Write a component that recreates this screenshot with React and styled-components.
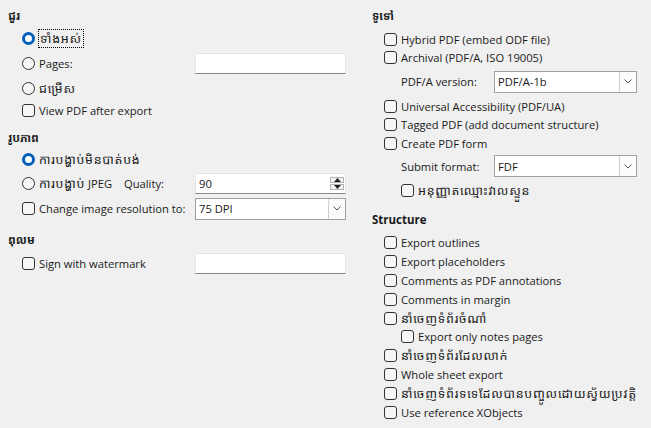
import React from 'react';
import styled, { createGlobalStyle } from 'styled-components';

const GlobalStyle = createGlobalStyle`
  html, body {
    margin: 0;
    padding: 0;
    background: #f0f0f0;
  }
  body {
    font-family: "Open Sans", "Noto Sans", "Noto Sans Khmer", "Khmer OS", sans-serif;
    font-size: 11.2px;
    color: #1a1a1a;
  }
`;

const Page = styled.div`
  width: 651px;
  height: 428px;
  display: grid;
  grid-template-columns: 364px 1fr;
  overflow: hidden;
`;

const Column = styled.div`
  display: flex;
  flex-direction: column;
  padding-left: ${p => p.$pad}px;
`;

const Heading = styled.div`
  height: 22px;
  margin-top: ${p => p.$top}px;
  margin-bottom: ${p => p.$bottom || 0}px;
  display: flex;
  align-items: center;
  font-weight: 700;
  font-size: 11.5px;
`;

const Row = styled.div`
  height: ${p => p.$h}px;
  display: flex;
  align-items: center;
  padding-left: ${p => p.$indent}px;
  flex-shrink: 0;
`;

const Option = styled.label`
  display: flex;
  align-items: center;
  gap: 4px;
  white-space: nowrap;
  width: ${p => (p.$w ? `${p.$w}px` : 'auto')};
`;

const Km = styled.span`
  font-size: 12.5px;
  letter-spacing: 0.7px;
`;

const Box = styled.span`
  width: 13px;
  height: 13px;
  box-sizing: border-box;
  border: 1px solid #333;
  border-radius: 3px;
  background: #f6f6f6;
  flex-shrink: 0;
`;

const Radio = styled.span`
  width: 13px;
  height: 13px;
  box-sizing: border-box;
  border-radius: 50%;
  flex-shrink: 0;
  border: ${p => (p.$on ? '3.5px solid #005fb8' : '1px solid #333')};
  background: ${p => (p.$on ? '#fff' : '#f6f6f6')};
`;

const Focus = styled.span`
  outline: 1px dotted #000;
  outline-offset: 0;
  padding: 0 1px;
`;

const FieldLabel = styled.span`
  width: ${p => p.$w}px;
  white-space: nowrap;
  flex-shrink: 0;
`;

const TextInput = styled.div`
  width: 151px;
  height: 21px;
  box-sizing: border-box;
  background: #fff;
  border: 1px solid #e5e5e5;
  border-bottom: 1px solid #868686;
  display: flex;
  align-items: center;
  padding-left: 3px;
`;

const Select = styled.div`
  width: ${p => p.$w}px;
  height: 22px;
  box-sizing: border-box;
  background: #fff;
  border: 1px solid #a0a0a0;
  display: flex;
  align-items: stretch;
`;

const SelectText = styled.span`
  flex: 1;
  display: flex;
  align-items: center;
  padding-left: 3px;
`;

const SelectButton = styled.span`
  width: 16px;
  border-left: 1px solid #d0d0d0;
  display: flex;
  align-items: center;
  justify-content: center;
  background: #fbfbfb;
`;

const Spin = styled.div`
  width: 16px;
  display: flex;
  flex-direction: column;
  gap: 1px;
  padding: 1px;
  box-sizing: border-box;
`;

const SpinButton = styled.span`
  flex: 1;
  border: 1px solid #b5b5b5;
  background: #f3f3f3;
  display: flex;
  align-items: center;
  justify-content: center;
`;

const Chevron = () => (
  <svg width="8" height="5" viewBox="0 0 8 5">
    <path d="M0.5 0.5 L4 4 L7.5 0.5" fill="none" stroke="#555" strokeWidth="1" />
  </svg>
);

const Tri = ({ up }) => (
  <svg width="7" height="4" viewBox="0 0 7 4">
    <path d={up ? 'M0 4 L3.5 0 L7 4 Z' : 'M0 0 L3.5 4 L7 0 Z'} fill="#222" />
  </svg>
);

const Check = ({ children }) => (
  <Option>
    <Box />
    <span>{children}</span>
  </Option>
);

const structure = [
  { t: 'Export outlines' },
  { t: 'Export placeholders' },
  { t: 'Comments as PDF annotations' },
  { t: 'Comments in margin' },
  { t: 'នាំចេញទំព័រចំណាំ', km: true },
  { t: 'Export only notes pages', sub: true },
  { t: 'នាំចេញទំព័រដែលលាក់', km: true },
  { t: 'Whole sheet export' },
  { t: 'នាំចេញទំព័រទទេដែលបានបញ្ចូលដោយស្វ័យប្រវត្តិ', km: true },
  { t: 'Use reference XObjects' },
];

export default function App() {
  return (
    <>
      <GlobalStyle />
      <Page>
        <Column $pad={8}>
          <Heading $top={4}>ជួរ</Heading>
          <Row $h={24} $indent={14}>
            <Option>
              <Radio $on />
              <Focus><Km>ទាំងអស់</Km></Focus>
            </Option>
          </Row>
          <Row $h={26} $indent={14}>
            <Option $w={173}>
              <Radio />
              <span>Pages:</span>
            </Option>
            <TextInput />
          </Row>
          <Row $h={24} $indent={14}>
            <Option>
              <Radio />
              <Km>ជម្រើស</Km>
            </Option>
          </Row>
          <Row $h={20} $indent={14}>
            <Check>View PDF after export</Check>
          </Row>

          <Heading $top={6}>រូបភាព</Heading>
          <Row $h={23} $indent={14}>
            <Option>
              <Radio $on />
              <Km>ការបង្ហាប់មិនបាត់បង់</Km>
            </Option>
          </Row>
          <Row $h={24} $indent={14}>
            <Option $w={102}>
              <Radio />
              <span><Km>ការបង្ហាប់</Km> JPEG</span>
            </Option>
            <FieldLabel $w={71}>Quality:</FieldLabel>
            <TextInput>
              <span style={{ flex: 1 }}>90</span>
              <Spin>
                <SpinButton><Tri up /></SpinButton>
                <SpinButton><Tri /></SpinButton>
              </Spin>
            </TextInput>
          </Row>
          <Row $h={27} $indent={14}>
            <Option $w={173}>
              <Box />
              <span>Change image resolution to:</span>
            </Option>
            <Select $w={151}>
              <SelectText>75 DPI</SelectText>
              <SelectButton><Chevron /></SelectButton>
            </Select>
          </Row>

          <Heading $top={6}>ពុលម</Heading>
          <Row $h={27} $indent={14}>
            <Option $w={173}>
              <Box />
              <span>Sign with watermark</span>
            </Option>
            <TextInput />
          </Row>
        </Column>

        <Column $pad={8}>
          <Heading $top={4} $bottom={4}>ទូទៅ</Heading>
          <Row $h={18} $indent={12}>
            <Check>Hybrid PDF (embed ODF file)</Check>
          </Row>
          <Row $h={18} $indent={12}>
            <Check>Archival (PDF/A, ISO 19005)</Check>
          </Row>
          <Row $h={31} $indent={29}>
            <FieldLabel $w={93}>PDF/A version:</FieldLabel>
            <Select $w={143}>
              <SelectText>PDF/A-1b</SelectText>
              <SelectButton><Chevron /></SelectButton>
            </Select>
          </Row>
          <Row $h={18} $indent={12}>
            <Check>Universal Accessibility (PDF/UA)</Check>
          </Row>
          <Row $h={18.5} $indent={12}>
            <Check>Tagged PDF (add document structure)</Check>
          </Row>
          <Row $h={19} $indent={12}>
            <Check>Create PDF form</Check>
          </Row>
          <Row $h={27} $indent={29}>
            <FieldLabel $w={93}>Submit format:</FieldLabel>
            <Select $w={143}>
              <SelectText>FDF</SelectText>
              <SelectButton><Chevron /></SelectButton>
            </Select>
          </Row>
          <Row $h={21} $indent={29}>
            <Check><Km>អនុញ្ញាតឈ្មោះវាលស្ទួន</Km></Check>
          </Row>

          <Heading $top={8} $bottom={3}>Structure</Heading>
          {structure.map(item => (
            <Row key={item.t} $h={18.8} $indent={item.sub ? 29 : 12}>
              <Check>{item.km ? <Km>{item.t}</Km> : item.t}</Check>
            </Row>
          ))}
        </Column>
      </Page>
    </>
  );
}
